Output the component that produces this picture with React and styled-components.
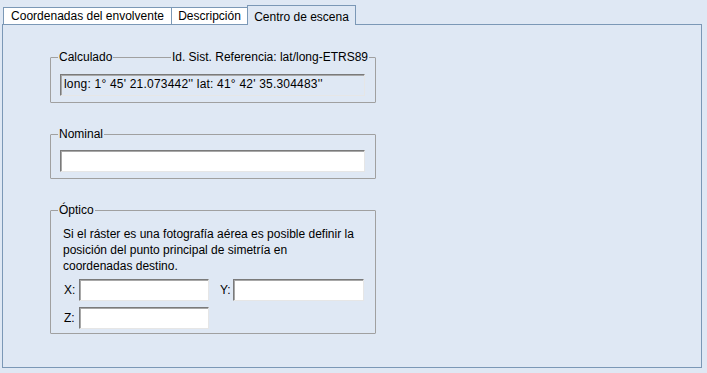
import React from 'react';
import styled, { createGlobalStyle } from 'styled-components';

const GlobalStyle = createGlobalStyle`
  html, body {
    margin: 0;
    background: #dfe8f4;
  }
  body {
    font-family: "Liberation Sans", Arial, sans-serif;
    font-size: 12px;
    color: #000;
  }
`;

const Window = styled.div`
  width: 707px;
  height: 373px;
  box-sizing: border-box;
  padding: 5px 5px 5px 2px;
  display: flex;
  flex-direction: column;
`;

const TabStrip = styled.div`
  display: flex;
  align-items: flex-end;
  height: 19px;
  padding-left: 1px;
  position: relative;
  z-index: 1;
`;

const Tab = styled.div`
  box-sizing: border-box;
  width: ${p => p.$width}px;
  height: ${p => (p.$active ? 20 : 17)}px;
  margin-bottom: ${p => (p.$active ? -1 : 0)}px;
  margin-left: ${p => (p.$first ? 0 : -1)}px;
  border: 1px solid #7b98b6;
  border-bottom: none;
  background: ${p => (p.$active ? '#dfe8f4' : '#fff')};
  line-height: ${p => (p.$active ? 19 : 16)}px;
  padding-top: ${p => (p.$active ? 2 : 0)}px;
  text-align: center;
  white-space: nowrap;
`;

const Panel = styled.div`
  flex: 1;
  border: 1px solid #7b98b6;
  background: #dfe8f4;
  padding: 32px 0 0 47px;
  display: flex;
  flex-direction: column;
  gap: 31px;
`;

const GroupBox = styled.div`
  position: relative;
  box-sizing: border-box;
  width: 326px;
  border: 1px solid #a0a0a0;
  border-radius: 1px;
  padding: ${p => p.$pad};
`;

const Legend = styled.span`
  position: absolute;
  top: -8px;
  ${p => (p.$right ? 'right: 6px;' : 'left: 7px;')}
  background: #dfe8f4;
  padding: 0 1px;
  line-height: 14px;
  white-space: nowrap;
`;

const TextBox = styled.div`
  box-sizing: border-box;
  width: ${p => p.$width}px;
  height: 22px;
  border: 1px solid;
  border-color: #7a7a7a #e6e6e6 #e6e6e6 #7a7a7a;
  box-shadow: inset 1px 1px 0 #a8a8a8;
  background: ${p => (p.$readOnly ? '#dfe8f4' : '#fff')};
  padding: 0 3px;
  line-height: 19px;
  white-space: nowrap;
  letter-spacing: ${p => (p.$readOnly ? '0.2px' : '0')};
`;

const Note = styled.p`
  margin: 0 0 5px 2px;
  line-height: 16px;
  width: 292px;
`;

const FieldRow = styled.div`
  display: flex;
  gap: 8px;
  margin-bottom: 6px;
  &:last-child {
    margin-bottom: 0;
  }
`;

const Field = styled.div`
  display: flex;
  align-items: center;
`;

const FieldLabel = styled.span`
  width: ${p => p.$width}px;
  padding-left: 3px;
  box-sizing: border-box;
`;

export default function App() {
  return (
    <>
      <GlobalStyle />
      <Window>
        <TabStrip>
          <Tab $first $width={169}>Coordenadas del envolvente</Tab>
          <Tab $width={77}>Descripción</Tab>
          <Tab $active $width={109}>Centro de escena</Tab>
        </TabStrip>
        <Panel>
          <GroupBox $pad="16px 9px 6px 9px">
            <Legend>Calculado</Legend>
            <Legend $right>Id. Sist. Referencia: lat/long-ETRS89</Legend>
            <TextBox $readOnly $width={305}>
              long: 1° 45' 21.073442'' lat: 41° 42' 35.304483''
            </TextBox>
          </GroupBox>
          <GroupBox $pad="15px 9px 6px 9px">
            <Legend>Nominal</Legend>
            <TextBox $width={305} />
          </GroupBox>
          <GroupBox $pad="15px 9px 4px 10px">
            <Legend>Óptico</Legend>
            <Note>
              Si el ráster es una fotografía aérea es posible definir la
              posición del punto principal de simetría en coordenadas destino.
            </Note>
            <FieldRow>
              <Field>
                <FieldLabel $width={18}>X:</FieldLabel>
                <TextBox $width={130} />
              </Field>
              <Field>
                <FieldLabel $width={16}>Y:</FieldLabel>
                <TextBox $width={131} />
              </Field>
            </FieldRow>
            <FieldRow>
              <Field>
                <FieldLabel $width={18}>Z:</FieldLabel>
                <TextBox $width={130} />
              </Field>
            </FieldRow>
          </GroupBox>
        </Panel>
      </Window>
    </>
  );
}
